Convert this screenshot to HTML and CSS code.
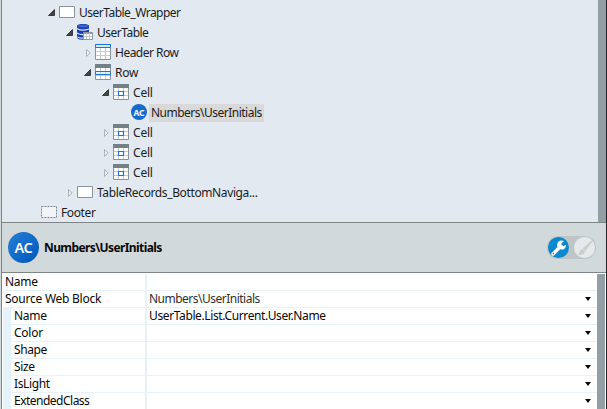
FILE: index.html
```
<!DOCTYPE html>
<html lang="en">
<head>
<meta charset="utf-8">
<title>Widget Tree</title>
<link rel="stylesheet" href="styles.css">
</head>
<body>
<svg class="defs" width="0" height="0" aria-hidden="true">
  <symbol id="open" viewBox="0 0 8 8"><path d="M6.5 .5V6.5H.5Z" fill="#444" stroke="#222" stroke-width=".8"/></symbol>
  <symbol id="shut" viewBox="0 0 8 8"><path d="M2.5 .5V7.5L6.2 4Z" fill="#e9eef2" stroke="#b0b4b7"/></symbol>
  <symbol id="box" viewBox="0 0 16 16"><path d="M.5 2.5h15v11H.5z" fill="#fff" stroke="#87949a"/></symbol>
  <symbol id="dash" viewBox="0 0 16 16"><path d="M.5 2.5h15v11H.5z" fill="#f1f5f8" stroke="#7d898e" stroke-dasharray="2 1"/></symbol>
  <symbol id="grid" viewBox="0 0 16 16"><path d="M.5 .5h15v15H.5z" fill="#fff" stroke="#87949a"/><path d="M5.5 4v11M10.5 4v11M1 7.5h14M1 11.5h14" stroke="#c5cbce"/></symbol>
  <symbol id="head" viewBox="0 0 16 16"><use href="#grid"/><path d="M.5 .5h15v3H.5z" fill="#d4eaff" stroke="#1976d2"/></symbol>
  <symbol id="row" viewBox="0 0 16 16"><use href="#grid"/><path d="M0 0h16v4H0z" fill="#728087"/><path d="M.5 7.5h15v3H.5z" fill="#e2f1ff" stroke="#1976d2"/><path d="M5.5 8v2M10.5 8v2" stroke="#b8d4eb"/></symbol>
  <symbol id="cell" viewBox="0 0 16 16"><use href="#grid"/><path d="M0 0h16v4H0z" fill="#728087"/><path d="M5.5 7.5h5v4h-5z" fill="#fff" stroke="#1976d2" stroke-width="1.2"/></symbol>
  <symbol id="data" viewBox="0 0 16 16"><path d="M0 2C0-.6 12-.6 12 2V13.5C12 16.5 0 16.5 0 13.5Z" fill="#173daf"/><ellipse cx="6" cy="2" rx="5.2" ry="1.5" fill="#3665ca"/><path d="M0 4.5Q5 7.5 12 5M0 9Q3 11 7 10.5M0 13Q3 14.5 6 14" fill="none" stroke="#d8e3f5" stroke-width="1.1"/><path d="M6.5 8.5h9v7h-9z" fill="#fff" stroke="#8d999e"/><path d="M7 9.5h8" stroke="#8d999e"/><path d="M9.5 9v6M12.5 9v6M7 12.5h8" stroke="#b9c0c3" stroke-width=".8"/></symbol>
</svg>
<main class="window">
  <section class="tree">
    <div class="node l1"><svg class="arrow"><use href="#open"/></svg><svg class="icon"><use href="#box"/></svg><span class="label tight">UserTable_Wrapper</span></div>
    <div class="node l2"><svg class="arrow"><use href="#open"/></svg><svg class="icon"><use href="#data"/></svg><span class="label tight">UserTable</span></div>
    <div class="node l3"><svg class="arrow"><use href="#shut"/></svg><svg class="icon"><use href="#head"/></svg><span class="label tight">Header Row</span></div>
    <div class="node l3"><svg class="arrow"><use href="#open"/></svg><svg class="icon"><use href="#row"/></svg><span class="label">Row</span></div>
    <div class="node l4"><svg class="arrow"><use href="#open"/></svg><svg class="icon"><use href="#cell"/></svg><span class="label">Cell</span></div>
    <div class="node l5"><span class="arrow"></span><span class="icon avatar">AC</span><span class="label tight selected">Numbers\UserInitials</span></div>
    <div class="node l4"><svg class="arrow"><use href="#shut"/></svg><svg class="icon"><use href="#cell"/></svg><span class="label">Cell</span></div>
    <div class="node l4"><svg class="arrow"><use href="#shut"/></svg><svg class="icon"><use href="#cell"/></svg><span class="label">Cell</span></div>
    <div class="node l4"><svg class="arrow"><use href="#shut"/></svg><svg class="icon"><use href="#cell"/></svg><span class="label">Cell</span></div>
    <div class="node l2"><svg class="arrow"><use href="#shut"/></svg><svg class="icon"><use href="#box"/></svg><span class="label snug">TableRecords_BottomNaviga...</span></div>
    <div class="node l0"><span class="arrow"></span><svg class="icon"><use href="#dash"/></svg><span class="label snug">Footer</span></div>
  </section>
  <header class="head">
    <span class="avatar big">AC</span>
    <h1>Numbers\UserInitials</h1>
    <div class="toggle">
      <span class="knob on"><svg width="16" height="16" viewBox="0 0 14 14"><path d="M1.8 12.2L8.3 5.7" stroke="#fff" stroke-width="3" stroke-linecap="round"/><path d="M11.3 .9A4 4 0 1 0 13.3 4.2L10.8 5.4L8.8 3.4Z" fill="#fff"/><circle cx="2.2" cy="11.8" r=".7" fill="#0788d1"/></svg></span>
      <span class="knob"><svg width="16" height="16" viewBox="0 0 14 14"><path d="M13.5 .5L5.7 7.2L7.4 8.8Z" fill="#c9cece" stroke="#c9cece"/><path d="M5.2 8Q2.4 8 2.3 10.6Q1.8 12.3 .5 12.8Q6.8 14 6.9 9.7Z" fill="#c9cece"/></svg></span>
    </div>
  </header>
  <section class="props">
    <div class="grid">
      <div class="prop"><span class="key">Name</span><span class="value"></span></div>
      <div class="prop"><span class="key">Source Web Block</span><span class="value muted tight">Numbers\UserInitials</span><i class="drop"></i></div>
      <div class="prop sub"><span class="key">Name</span><span class="value snug">UserTable.List.Current.User.Name</span><i class="drop"></i></div>
      <div class="prop sub"><span class="key">Color</span><span class="value"></span><i class="drop"></i></div>
      <div class="prop sub"><span class="key snug">Shape</span><span class="value"></span><i class="drop"></i></div>
      <div class="prop sub"><span class="key snug">Size</span><span class="value"></span><i class="drop"></i></div>
      <div class="prop sub"><span class="key snug">IsLight</span><span class="value"></span><i class="drop"></i></div>
      <div class="prop sub"><span class="key tight">ExtendedClass</span><span class="value"></span><i class="drop"></i></div>
    </div>
  </section>
</main>
</body>
</html>
```
FILE: styles.css
```
* { box-sizing: border-box; }
body { margin: 0; overflow: hidden; background: #d1d9da; font: 12px/17px "Noto Sans", "Open Sans", sans-serif; color: #1b1c1e; }
.defs { display: block; }
.window { width: 606px; height: 409px; margin-left: 1px; border-left: 1px solid #7f8587; border-right: 1px solid #23252a; overflow: hidden; }
.tree { height: 222px; padding-top: 3px; background: #e2e9f0; border-right: 8px solid #939fa4; }
.node { display: flex; align-items: center; height: 20px; white-space: nowrap; }
.l0 { padding-left: 28px; }
.l1 { padding-left: 46px; }
.l2 { padding-left: 64px; }
.l3 { padding-left: 82px; }
.l4 { padding-left: 100px; }
.l5 { padding-left: 118px; }
.arrow { width: 8px; height: 8px; margin-right: 3px; flex: none; }
.icon { width: 16px; height: 16px; flex: none; margin-top: -2px; }
.label { margin-left: 2px; padding: 0 2px; height: 18px; line-height: 18px; letter-spacing: -.2px; }
.label.snug, .value.snug, .key.snug { letter-spacing: -.38px; }
.label.tight, .value.tight, .key.tight { letter-spacing: -.51px; }
.selected { background: #d9d9d9; }
.avatar { display: flex; align-items: center; justify-content: center; border-radius: 50%; background: #156bcd; color: #fff; font-size: 8.5px; font-weight: 700; }
.head { display: flex; align-items: center; height: 51px; padding: 0 10px 0 6px; background: #d1d9da; border-top: 1px solid #7f8587; border-bottom: 1px solid #7f8587; }
.big { width: 31px; height: 31px; background: linear-gradient(135deg, #2380d6, #0056bd); font-size: 14.5px; font-weight: 600; letter-spacing: -.3px; }
h1 { margin: 0 0 0 5px; font-size: 12px; line-height: 18px; letter-spacing: -.6px; color: #080808; }
.toggle { display: flex; justify-content: space-between; width: 49px; height: 23px; margin-left: auto; padding: 1px; border-radius: 12px; background: #bdc5c6; }
.knob { display: flex; align-items: center; justify-content: center; width: 21px; height: 21px; border-radius: 50%; background: #e5e9e9; }
.on { background: #0788d1; }
.props { height: 136px; padding: 1px 1px 0 1px; background: #fff; overflow: hidden; }
.grid { border-right: 8px solid #939fa4; }
.prop { display: flex; height: 17px; border-bottom: 1px solid #e5f2f9; color: #080808; white-space: nowrap; letter-spacing: -.25px; line-height: 15px; }
.key { width: 144px; padding-left: 2px; border-right: 2px solid #e5f2f9; flex: none; }
.sub .key { border-left: 8px solid #e5f2f9; padding-left: 3px; }
.value { flex: 1; padding-left: 2px; }
.muted { color: #303030; }
.drop { width: 6px; height: 4px; margin: 6px 6px 0 0; background: #080808; clip-path: polygon(0 0, 100% 0, 50% 100%); }
```
